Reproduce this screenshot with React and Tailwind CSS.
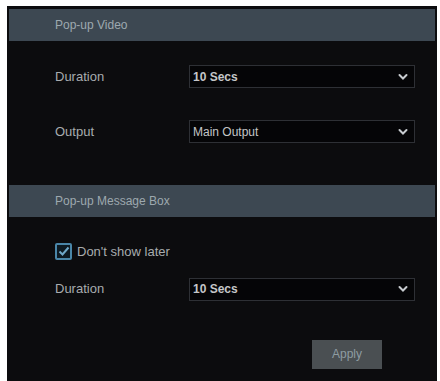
import React from 'react';

const Chevron = () => (
  <svg width="10" height="7" viewBox="0 0 10 7" className="absolute right-[6px] top-1/2 -translate-y-1/2">
    <path d="M1.5 1.5 L5 5 L8.5 1.5" fill="none" stroke="#c8ccd0" strokeWidth="2" strokeLinecap="round" />
  </svg>
);

const Select = ({ value, bold }) => (
  <div className={`relative ml-[134px] flex h-[23px] w-[226px] items-center border border-[#2e3035] bg-[#050507] pl-[3px] text-[12px] text-[#c4c6c8] ${bold ? 'font-bold' : 'font-normal'}`}>
    {value}
    <Chevron />
  </div>
);

const Row = ({ label, value, bold, className = '' }) => (
  <div className={`flex items-center pl-[46px] ${className}`}>
    <span className="w-0 whitespace-nowrap text-[13px] text-[#a8acae]">{label}</span>
    <Select value={value} bold={bold} />
  </div>
);

const Header = ({ title, className = '' }) => (
  <div className={`flex h-[32px] items-center bg-[#3d4852] pl-[46px] text-[12px] text-[#9ea8af] ${className}`}>
    {title}
  </div>
);

const App = () => {
  return (
    <div className="h-[381px] w-[440px] overflow-hidden bg-white pl-[7px] pt-[6px]" style={{ fontFamily: '"Liberation Sans", Arial, sans-serif' }}>
      <div className="flex h-[375px] w-[430px] flex-col bg-[#0c0c0e] px-[2px] pt-[3px]">
        <Header title="Pop-up Video" />
        <Row label="Duration" value="10 Secs" bold className="mt-[24px]" />
        <Row label="Output" value="Main Output" className="mt-[32px]" />
        <Header title="Pop-up Message Box" className="mt-[42px]" />

        <div className="mt-[25px] flex items-center pl-[46px]">
          <div className="flex h-[17px] w-[17px] items-center justify-center rounded-[2px] border-2 border-[#4a86a8] bg-[#0d1a22]">
            <svg width="12" height="11" viewBox="0 0 12 11">
              <path d="M1.5 5.5 L4.5 8.5 L10.5 1.5" fill="none" stroke="#6fa8c8" strokeWidth="2" />
            </svg>
          </div>
          <span className="ml-[5px] text-[13px] text-[#a8acae]">Don't show later</span>
        </div>

        <Row label="Duration" value="10 Secs" bold className="mt-[16px]" />

        <div className="mt-[39px] flex pl-[303px]">
          <button className="h-[29px] w-[70px] bg-[#4a4f52] text-[12px] text-[#8e9ca2]">Apply</button>
        </div>
      </div>
    </div>
  );
};

export default App;
